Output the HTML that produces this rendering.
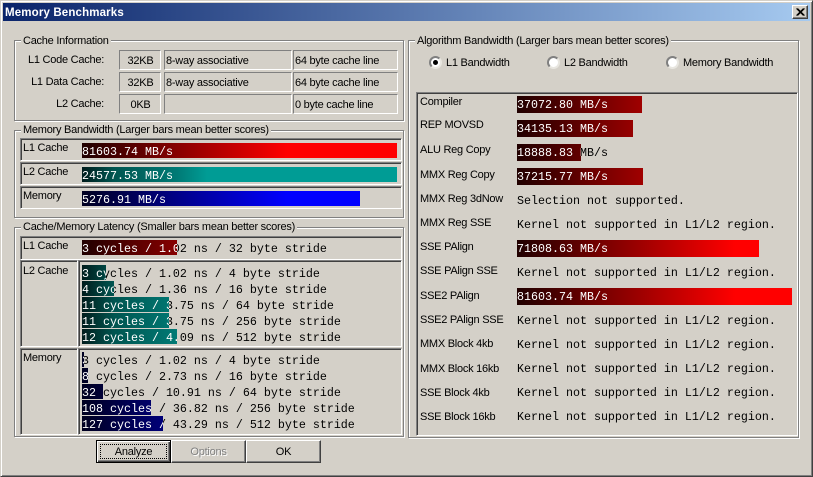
<!DOCTYPE html>
<html><head><meta charset="utf-8"><style>
html,body{margin:0;padding:0;background:#d4d0c8}
#w{position:relative;width:813px;height:477px;overflow:hidden;background:#d4d0c8;font:11px/13px "Liberation Sans",sans-serif;letter-spacing:-.25px;color:#000;box-sizing:border-box}
#w div{position:absolute;box-sizing:border-box;white-space:pre}
.g{border:1px solid #808080;box-shadow:1px 1px 0 #fff,inset 1px 1px 0 #fff}
.lg{background:#d4d0c8;padding:0 2px;height:13px}
.f{border:1px solid;border-color:#808080 #fff #fff #808080;line-height:20px;padding-left:1px}
.p{border:1px solid;border-color:#808080 #fff #fff #808080;box-shadow:inset 1px 1px 0 #404040}
.m{font:11.67px/19px "Liberation Mono",monospace;letter-spacing:0;color:#000;left:82px;height:15px}
.b{left:82px;height:15px;overflow:hidden;font:11.67px/19px "Liberation Mono",monospace;letter-spacing:0;color:#fff}
.r{background:linear-gradient(90deg,#200000,#ff0000) 0 0/205px 100% no-repeat #f00}
.t{background:linear-gradient(90deg,#001c1c 0,#005550 32px,#007a75 95px,#009c95 125px) no-repeat #009c95}
.u{background:linear-gradient(90deg,#000020,#0000ff) 0 0/205px 100% no-repeat #00f}
.l{left:420px;height:13px}
.v{left:517px;height:17px;font:11.67px/19px "Liberation Mono",monospace;letter-spacing:0;color:#000}
.k{left:517px;height:17px;overflow:hidden;font:11.67px/19px "Liberation Mono",monospace;letter-spacing:0;color:#fff}
.rk{background:linear-gradient(90deg,#200000,#ff0000) 0 0/218px 100% no-repeat #f00}
.btn{top:440px;height:23px;width:75px;text-align:center;line-height:23px;border:1px solid;border-color:#fff #404040 #404040 #fff;box-shadow:inset -1px -1px 0 #808080}
.rd{width:13px;height:13px;border-radius:50%;background:#fff;border:2px solid;border-color:#808080 #e8e6e0 #e8e6e0 #808080}
</style></head><body><div id="w">
<div style="left:0;top:0;width:813px;height:477px;border:1px solid;border-color:#d4d0c8 #404040 #404040 #d4d0c8;box-shadow:inset 1px 1px 0 #fff,inset -1px -1px 0 #808080"></div>
<div style="left:3px;top:3px;width:807px;height:18px;background:linear-gradient(90deg,#0a246a,#a6caf0)"></div>
<div style="left:5px;top:6px;color:#fff;font-weight:bold;font-size:11.5px;line-height:14px;letter-spacing:.15px">Memory Benchmarks</div>
<div style="left:792px;top:5px;width:16px;height:14px;background:#d4d0c8;border:1px solid;border-color:#fff #404040 #404040 #fff;box-shadow:inset -1px -1px 0 #808080"><svg width="14" height="12" style="position:absolute;left:0;top:0"><path d="M3.5 2.5L10.5 9.5M4.5 2.5L11.5 9.5M10.5 2.5L3.5 9.5M11.5 2.5L4.5 9.5" stroke="#000" stroke-width="1.1" fill="none"/></svg></div>

<div class="g" style="left:14px;top:40px;width:390px;height:81px"></div>
<div class="lg" style="left:21px;top:35px">Cache Information</div>
<div style="left:20px;width:84px;top:54px;text-align:right">L1 Code Cache:</div>
<div style="left:20px;width:84px;top:76px;text-align:right">L1 Data Cache:</div>
<div style="left:20px;width:84px;top:98px;text-align:right">L2 Cache:</div>
<div class="f" style="left:119px;top:50px;width:42px;height:20px;text-align:center">32KB</div>
<div class="f" style="left:164px;top:50px;width:128px;height:20px">8-way associative</div>
<div class="f" style="left:293px;top:50px;width:105px;height:20px">64 byte cache line</div>
<div class="f" style="left:119px;top:72px;width:42px;height:20px;text-align:center">32KB</div>
<div class="f" style="left:164px;top:72px;width:128px;height:20px">8-way associative</div>
<div class="f" style="left:293px;top:72px;width:105px;height:20px">64 byte cache line</div>
<div class="f" style="left:119px;top:94px;width:42px;height:20px;text-align:center">0KB</div>
<div class="f" style="left:164px;top:94px;width:128px;height:20px"></div>
<div class="f" style="left:293px;top:94px;width:105px;height:20px">0 byte cache line</div>

<div class="g" style="left:14px;top:130px;width:390px;height:88px"></div>
<div class="lg" style="left:21px;top:124px">Memory Bandwidth (Larger bars mean better scores)</div>
<div class="p" style="left:20px;top:138px;width:382px;height:23px"></div>
<div class="p" style="left:20px;top:162px;width:382px;height:23px"></div>
<div class="p" style="left:20px;top:186px;width:382px;height:23px"></div>
<div style="left:23px;top:142px">L1 Cache</div>
<div style="left:23px;top:166px">L2 Cache</div>
<div style="left:23px;top:190px">Memory</div>
<div class="b r" style="top:143px;width:315px">81603.74 MB/s</div>
<div class="b t" style="top:167px;width:315px">24577.53 MB/s</div>
<div class="b u" style="top:191px;width:278px">5276.91 MB/s</div>

<div class="g" style="left:14px;top:227px;width:390px;height:210px"></div>
<div class="lg" style="left:21px;top:221px">Cache/Memory Latency (Smaller bars mean better scores)</div>
<div class="p" style="left:20px;top:236px;width:382px;height:24px"></div>
<div class="p" style="left:20px;top:260px;width:58px;height:87px"></div>
<div class="p" style="left:78px;top:260px;width:324px;height:87px"></div>
<div class="p" style="left:20px;top:348px;width:58px;height:87px"></div>
<div class="p" style="left:78px;top:348px;width:324px;height:87px"></div>
<div style="left:23px;top:240px">L1 Cache</div>
<div style="left:23px;top:265px">L2 Cache</div>
<div style="left:23px;top:352px">Memory</div>

<div class="m" style="top:240px">3 cycles / 1.02 ns / 32 byte stride</div>
<div class="b r" style="top:240px;width:95px">3 cycles / 1.02 ns / 32 byte stride</div>

<div class="m" style="top:265px">3 cycles / 1.02 ns / 4 byte stride</div>
<div class="b t" style="top:265px;width:24px">3 cycles / 1.02 ns / 4 byte stride</div>
<div class="m" style="top:281px">4 cycles / 1.36 ns / 16 byte stride</div>
<div class="b t" style="top:281px;width:32px">4 cycles / 1.36 ns / 16 byte stride</div>
<div class="m" style="top:297px">11 cycles / 3.75 ns / 64 byte stride</div>
<div class="b t" style="top:297px;width:87px">11 cycles / 3.75 ns / 64 byte stride</div>
<div class="m" style="top:313px">11 cycles / 3.75 ns / 256 byte stride</div>
<div class="b t" style="top:313px;width:87px">11 cycles / 3.75 ns / 256 byte stride</div>
<div class="m" style="top:329px">12 cycles / 4.09 ns / 512 byte stride</div>
<div class="b t" style="top:329px;width:95px">12 cycles / 4.09 ns / 512 byte stride</div>

<div class="m" style="top:352px">3 cycles / 1.02 ns / 4 byte stride</div>
<div class="b u" style="top:352px;width:2px">3 cycles / 1.02 ns / 4 byte stride</div>
<div class="m" style="top:368px">8 cycles / 2.73 ns / 16 byte stride</div>
<div class="b u" style="top:368px;width:6px">8 cycles / 2.73 ns / 16 byte stride</div>
<div class="m" style="top:384px">32 cycles / 10.91 ns / 64 byte stride</div>
<div class="b u" style="top:384px;width:21px">32 cycles / 10.91 ns / 64 byte stride</div>
<div class="m" style="top:400px">108 cycles / 36.82 ns / 256 byte stride</div>
<div class="b u" style="top:400px;width:69px">108 cycles / 36.82 ns / 256 byte stride</div>
<div class="m" style="top:416px">127 cycles / 43.29 ns / 512 byte stride</div>
<div class="b u" style="top:416px;width:81px">127 cycles / 43.29 ns / 512 byte stride</div>

<div class="btn" style="left:171px;color:#808080;text-shadow:1px 1px 0 #fff">Options</div>
<div class="btn" style="left:246px">OK</div>
<div class="btn" style="left:96px;border:1px solid #000;box-shadow:inset 1px 1px 0 #fff,inset -1px -1px 0 #404040,inset -2px -2px 0 #808080">Analyze</div>
<div style="left:100px;top:444px;width:67px;height:15px;border:1px dotted #000"></div>

<div class="g" style="left:408px;top:40px;width:391px;height:398px"></div>
<div class="lg" style="left:415px;top:35px">Algorithm Bandwidth (Larger bars mean better scores)</div>
<div class="rd" style="left:429px;top:56px"></div>
<div style="left:433px;top:60px;width:5px;height:5px;border-radius:50%;background:#000"></div>
<div style="left:446px;top:57px">L1 Bandwidth</div>
<div class="rd" style="left:547px;top:56px"></div>
<div style="left:564px;top:57px">L2 Bandwidth</div>
<div class="rd" style="left:666px;top:56px"></div>
<div style="left:683px;top:57px">Memory Bandwidth</div>
<div class="p" style="left:416px;top:92px;width:382px;height:344px"></div>

<div class="l" style="top:96px">Compiler</div>
<div class="l" style="top:119px">REP MOVSD</div>
<div class="l" style="top:144px">ALU Reg Copy</div>
<div class="l" style="top:169px">MMX Reg Copy</div>
<div class="l" style="top:193px">MMX Reg 3dNow</div>
<div class="l" style="top:217px">MMX Reg SSE</div>
<div class="l" style="top:241px">SSE PAlign</div>
<div class="l" style="top:265px">SSE PAlign SSE</div>
<div class="l" style="top:290px">SSE2 PAlign</div>
<div class="l" style="top:314px">SSE2 PAlign SSE</div>
<div class="l" style="top:338px">MMX Block 4kb</div>
<div class="l" style="top:363px">MMX Block 16kb</div>
<div class="l" style="top:387px">SSE Block 4kb</div>
<div class="l" style="top:411px">SSE Block 16kb</div>

<div class="k rk" style="top:96px;width:125px">37072.80 MB/s</div>
<div class="k rk" style="top:120px;width:116px">34135.13 MB/s</div>
<div class="v" style="top:144px">18888.83 MB/s</div>
<div class="k rk" style="top:144px;width:64px">18888.83 MB/s</div>
<div class="k rk" style="top:168px;width:126px">37215.77 MB/s</div>
<div class="v" style="top:192px">Selection not supported.</div>
<div class="v" style="top:216px">Kernel not supported in L1/L2 region.</div>
<div class="k rk" style="top:240px;width:242px">71808.63 MB/s</div>
<div class="v" style="top:264px">Kernel not supported in L1/L2 region.</div>
<div class="k rk" style="top:288px;width:275px">81603.74 MB/s</div>
<div class="v" style="top:312px">Kernel not supported in L1/L2 region.</div>
<div class="v" style="top:336px">Kernel not supported in L1/L2 region.</div>
<div class="v" style="top:360px">Kernel not supported in L1/L2 region.</div>
<div class="v" style="top:384px">Kernel not supported in L1/L2 region.</div>
<div class="v" style="top:408px">Kernel not supported in L1/L2 region.</div>
</div></body></html>
